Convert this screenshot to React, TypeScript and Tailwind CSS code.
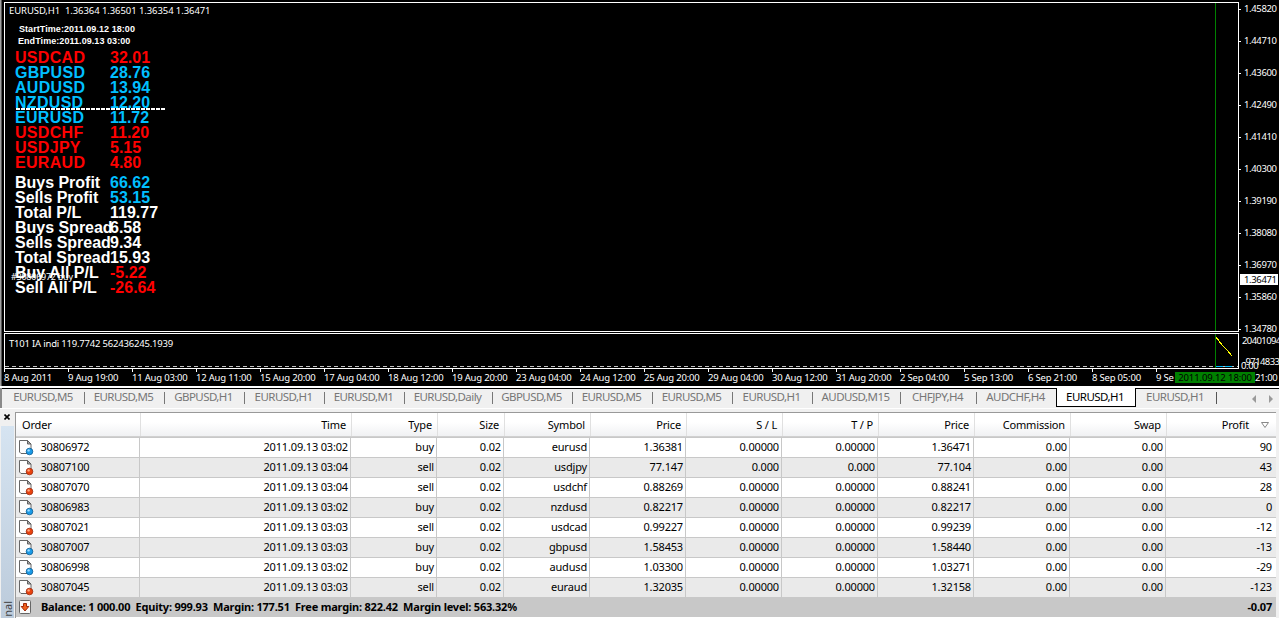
const S = (v: string) => v.split("|");

const pairs = [
  ["USDCAD", "32.01", "text-[#ff0000]"],
  ["GBPUSD", "28.76", "text-[#00bfff]"],
  ["AUDUSD", "13.94", "text-[#00bfff]"],
  ["NZDUSD", "12.20", "text-[#00bfff]"],
  ["EURUSD", "11.72", "text-[#00bfff]"],
  ["USDCHF", "11.20", "text-[#ff0000]"],
  ["USDJPY", "5.15", "text-[#ff0000]"],
  ["EURAUD", "4.80", "text-[#ff0000]"],
];

const totals = [
  ["Buys Profit", "66.62", "text-[#00bfff]"],
  ["Sells Profit", "53.15", "text-[#00bfff]"],
  ["Total P/L", "119.77", "text-white"],
  ["Buys Spread", "6.58", "text-white"],
  ["Sells Spread", "9.34", "text-white"],
  ["Total Spread", "15.93", "text-white"],
  ["Buy All P/L", "-5.22", "text-[#ff0000]"],
  ["Sell All P/L", "-26.64", "text-[#ff0000]"],
];

const prices = S("1.45820|1.44710|1.43600|1.42490|1.41410|1.40300|1.39190|1.38080|1.36970|1.35860|1.34780");
const dates = S(
  "8 Aug 2011|9 Aug 19:00|11 Aug 03:00|12 Aug 11:00|15 Aug 20:00|17 Aug 04:00|18 Aug 12:00|19 Aug 20:00|23 Aug 04:00|24 Aug 12:00|25 Aug 20:00|29 Aug 04:00|30 Aug 12:00|31 Aug 20:00|2 Sep 04:00|5 Sep 13:00|6 Sep 21:00|8 Sep 05:00|9 Se",
);

const tabs = [
  ["EURUSD,M5", "w-[81px]"],
  ["EURUSD,M5", "w-[80px]"],
  ["GBPUSD,H1", "w-[80px]"],
  ["EURUSD,H1", "w-[80px]"],
  ["EURUSD,M1", "w-[80px]"],
  ["EURUSD,Daily", "w-[88px]"],
  ["GBPUSD,M5", "w-[80px]"],
  ["EURUSD,M5", "w-[80px]"],
  ["EURUSD,M5", "w-[80px]"],
  ["EURUSD,H1", "w-[80px]"],
  ["AUDUSD,M15", "w-[88px]"],
  ["CHFJPY,H4", "w-[76px]"],
  ["AUDCHF,H4", "w-[79px]"],
];

const cols = "grid grid-cols-[124px_211px_86px_67px_86px_96px_96px_96px_96px_96px_96px_110px]";
const heads = S("Order|Time|Type|Size|Symbol|Price|S / L|T / P|Price|Commission|Swap|Profit");
const rows = [
  "30806972|2011.09.13 03:02|buy|0.02|eurusd|1.36381|0.00000|0.00000|1.36471|0.00|0.00|90",
  "30807100|2011.09.13 03:04|sell|0.02|usdjpy|77.147|0.000|0.000|77.104|0.00|0.00|43",
  "30807070|2011.09.13 03:04|sell|0.02|usdchf|0.88269|0.00000|0.00000|0.88241|0.00|0.00|28",
  "30806983|2011.09.13 03:02|buy|0.02|nzdusd|0.82217|0.00000|0.00000|0.82217|0.00|0.00|0",
  "30807021|2011.09.13 03:03|sell|0.02|usdcad|0.99227|0.00000|0.00000|0.99239|0.00|0.00|-12",
  "30807007|2011.09.13 03:03|buy|0.02|gbpusd|1.58453|0.00000|0.00000|1.58440|0.00|0.00|-13",
  "30806998|2011.09.13 03:02|buy|0.02|audusd|1.03300|0.00000|0.00000|1.03271|0.00|0.00|-29",
  "30807045|2011.09.13 03:03|sell|0.02|euraud|1.32035|0.00000|0.00000|1.32158|0.00|0.00|-123",
].map(S);

function OrderIcon({ buy }: { buy: boolean }) {
  return (
    <svg width="16" height="16" viewBox="0 0 16 16" className="shrink-0">
      <path d="M.5 .5h8l3.500 3.500v9.500h-10l-1.500-1.500z" fill="#fdfdfd" stroke="#666" />
      <path d="M8.500 .5v3.500h3.500z" fill="#aaa" stroke="#555" strokeWidth=".9" />
      <circle cx="10.500" cy="11.500" r="3.300" fill={buy ? "#1c9be6" : "#e8430f"} stroke={buy ? "#0a5c94" : "#9d2a0c"} strokeWidth=".8" />
      <circle cx="9.600" cy="10.400" r="1.200" fill={buy ? "#9fdcff" : "#ffab85"} />
    </svg>
  );
}

function BalanceIcon() {
  return (
    <svg width="14" height="16" viewBox="0 0 14 16" className="shrink-0">
      <rect x="1.500" y="1.500" width="11" height="13" rx="1" fill="#fafafa" stroke="#666" />
      <path d="M5.500 4.500h3v3h2.300L7 12 3.200 7.500h2.300z" fill="#f0601c" stroke="#a02808" />
    </svg>
  );
}

function Chart() {
  return (
    <div className="flex h-[386px] border-l border-[#555] bg-black text-[9.5px] leading-[12px] tracking-[-0.25px] text-white">
      <div className="flex w-[1237px] shrink-0 flex-col pl-[2px] pt-[2px]">
        <div className="relative h-[330px] shrink-0 border border-white">
          <div className="absolute left-[4px] top-[2px] whitespace-pre tracking-[-0.08px]">{"EURUSD,H1  1.36364 1.36501 1.36354 1.36471"}</div>
          <div className="pl-[13px] pt-[20px] font-['Liberation_Sans',sans-serif] text-[9px] font-bold leading-[12px] tracking-[0.06px]">
            <div className="pl-[1px]">StartTime:2011.09.12 18:00</div>
            <div>EndTime:2011.09.13 03:00</div>
          </div>
          <div className="pl-[10px] pt-[3px] font-['Liberation_Sans',sans-serif] text-[16px] font-bold leading-[15px] tracking-normal">
            {pairs.map(([a, b, c]) => (
              <div key={a} className={`flex h-[15px] ${c}`}>
                <span className="w-[95px] shrink-0 tracking-[0.3px]">{a}</span>
                <span>{b}</span>
              </div>
            ))}
            <div className="h-[5px]" />
            {totals.map(([a, b, c]) => (
              <div key={a} className="flex h-[15px] whitespace-nowrap">
                <span className="w-[95px] shrink-0 tracking-[-0.02px]">{a}</span>
                <span className={c}>{b}</span>
              </div>
            ))}
          </div>
          <div className="absolute left-[11px] top-[105px] h-[2px] w-[149px] bg-[repeating-linear-gradient(90deg,#fff_0_4px,transparent_4px_5px)]" />
          <div className="absolute left-[6px] top-[268px] text-[9px]">#30806972 buy</div>
          <div className="absolute left-[1210px] top-0 h-[328px] w-px bg-[#008000]" />
        </div>
        <div className="relative mt-px h-[36px] shrink-0 border border-white">
          <div className="pl-[4px] pt-[4px] tracking-[-0.2px]">T101 IA indi 119.7742 562436245.1939</div>
          <svg className="absolute left-0 top-0" width="1233" height="34" shapeRendering="crispEdges">
            <path d="M0 32.5H1233" stroke="#c0c0c0" strokeDasharray="4 3" />
            <path d="M1210.500 0V34" stroke="#008000" />
            <path d="M1211 32.5h16" stroke="#00bfff" strokeDasharray="7 2" />
            <path d="M1211 3l6 8 5 5 5 6" stroke="#ffff00" fill="none" />
          </svg>
        </div>
        <div className="relative flex h-[17px] whitespace-nowrap">
          {dates.map((d) => (
            <div key={d} className="w-[64px] shrink-0">
              <div className="h-[3px] w-px bg-white" />
              <div className="tracking-[-0.2px]">{d}</div>
            </div>
          ))}
          <div className="absolute left-[1171px] top-[3px] h-[11px] w-[80px] bg-[#008000] text-center leading-[12px] tracking-[-0.1px] text-black">2011.09.12 18:00</div>
          <div className="absolute left-[1251px] top-[3px] tracking-[-0.4px]">21:00</div>
        </div>
      </div>
      <div className="relative w-[40px] shrink-0 pt-[3px] tracking-[-0.35px]">
        {prices.map((p) => (
          <div key={p} className="flex h-[32px] items-start">
            <span className="mt-[6px] h-px w-[2px] bg-white" />
            <span className="ml-[3px]">{p}</span>
          </div>
        ))}
        <div className="absolute left-[1px] top-[274px] h-[11px] w-[38px] bg-white pl-[4px] text-black">1.36471</div>
        <div className="absolute left-[3px] top-[335px] tracking-[-0.6px]">20401094</div>
        <div className="absolute left-[4px] top-[356px] tracking-[-0.6px]">-9714833</div>
        <div className="absolute left-[2px] top-[360px]">0.00</div>
      </div>
    </div>
  );
}

function ChartTabs() {
  return (
    <div className="flex h-[20px] border-l-2 border-[#8a8a8a] text-[11.5px] leading-[16px] tracking-[-0.55px] text-[#777]">
      <div className="flex border-t border-black pl-[2px]">
        {tabs.map(([t, w], i) => (
          <div key={i} className={`flex shrink-0 items-start ${w}`}>
            <span className="grow pr-[2px] text-center">{t}</span>
            {i < 12 && <span className="mt-[3px] h-[12px] w-px bg-[#777]" />}
          </div>
        ))}
      </div>
      <div className="h-[19px] w-[80px] shrink-0 border border-t-0 border-black bg-white pr-[2px] pt-px text-center text-black">EURUSD,H1</div>
      <div className="flex grow border-t border-black">
        <div className="flex w-[81px]">
          <span className="grow pr-[2px] text-center">EURUSD,H1</span>
          <span className="mt-[3px] h-[12px] w-px bg-[#555]" />
        </div>
        <div className="flex grow items-center justify-end gap-[13px] pr-[6px]">
          <svg width="4" height="8"><path d="M4 0v8L0 4z" fill="#9a9a9a" /></svg>
          <svg width="4" height="8"><path d="M0 0v8l4-4z" fill="#9a9a9a" /></svg>
        </div>
      </div>
    </div>
  );
}

function Terminal() {
  return (
    <div className="flex h-[206px]">
      <div className="flex w-[15px] shrink-0 flex-col">
        <div className="flex h-[14px] pl-[4px] pt-[2px]">
          <svg width="6" height="6"><path d="M.5 .5l5 5M5.500 .5l-5 5" stroke="#000" strokeWidth="1.600" /></svg>
        </div>
        <div className="ml-px flex w-[13px] grow items-end justify-center overflow-hidden bg-linear-to-b from-[#d6e4f1] to-[#bccbdb]">
          <span className="mb-px rotate-180 text-[11px] leading-[13px] text-[#444] [writing-mode:vertical-rl]">nal</span>
        </div>
      </div>
      <div className="w-[1261px] shrink-0 border-l border-t border-[#999] bg-white">
        <div className={`h-[24px] border-b border-[#d0d0d0] bg-linear-to-b from-white from-40% to-[#f0f1f3] leading-[23px] tracking-[-0.15px] ${cols}`}>
          {heads.map((h, i) => (
            <div key={i} className={i === 0 ? "pl-[6px]" : i === 11 ? "flex items-center justify-end gap-[12px] border-l border-[#e0e0e0] pr-[7px]" : "border-l border-[#e0e0e0] pr-[5px] text-right"}>
              <span>{h}</span>
              {i === 11 && <svg width="8" height="6"><path d="M.5 .5h7L4 5.500z" fill="#fff" stroke="#888" /></svg>}
            </div>
          ))}
        </div>
        {rows.map((r, j) => (
          <div key={r[0]} className={`h-[20px] border-t border-[#c8c8c8] leading-[17px] tracking-[-0.17px] ${j % 2 ? "bg-[#eaeaea]" : "bg-white"} ${cols}`}>
            {r.map((v, i) =>
              i === 0 ? (
                <div key={i} className="flex items-start gap-[5px] border-r border-[#c8c8c8] pl-[3px]">
                  <span className="pt-[2px]"><OrderIcon buy={r[2] === "buy"} /></span>
                  <span className="pl-[0.5px]">{v}</span>
                </div>
              ) : (
                <div key={i} className={i === 11 ? "pr-[4px] text-right" : "border-r border-[#c8c8c8] pr-[2px] text-right"}>{v}</div>
              ),
            )}
          </div>
        ))}
        <div className="flex h-[20px] items-center bg-[#c8c8c8] pl-[2px] pr-[4px] font-bold leading-[20px] tracking-[-0.21px]">
          <BalanceIcon />
          <span className="grow whitespace-pre pl-[9px]">{"Balance: 1 000.00  Equity: 999.93  Margin: 177.51  Free margin: 822.42  Margin level: 563.32%"}</span>
          <span>-0.07</span>
        </div>
      </div>
    </div>
  );
}

export default function App() {
  return (
    <div className="h-[618px] w-[1279px] overflow-hidden bg-[#f0f0f0] font-['Noto_Sans','Open_Sans',sans-serif] text-[11px] text-black">
      <div className="border-l border-[#a0a0a0]">
        <Chart />
      </div>
      <div className="h-[2px] bg-white" />
      <ChartTabs />
      <div className="h-[4px] border-t border-white" />
      <Terminal />
    </div>
  );
}
